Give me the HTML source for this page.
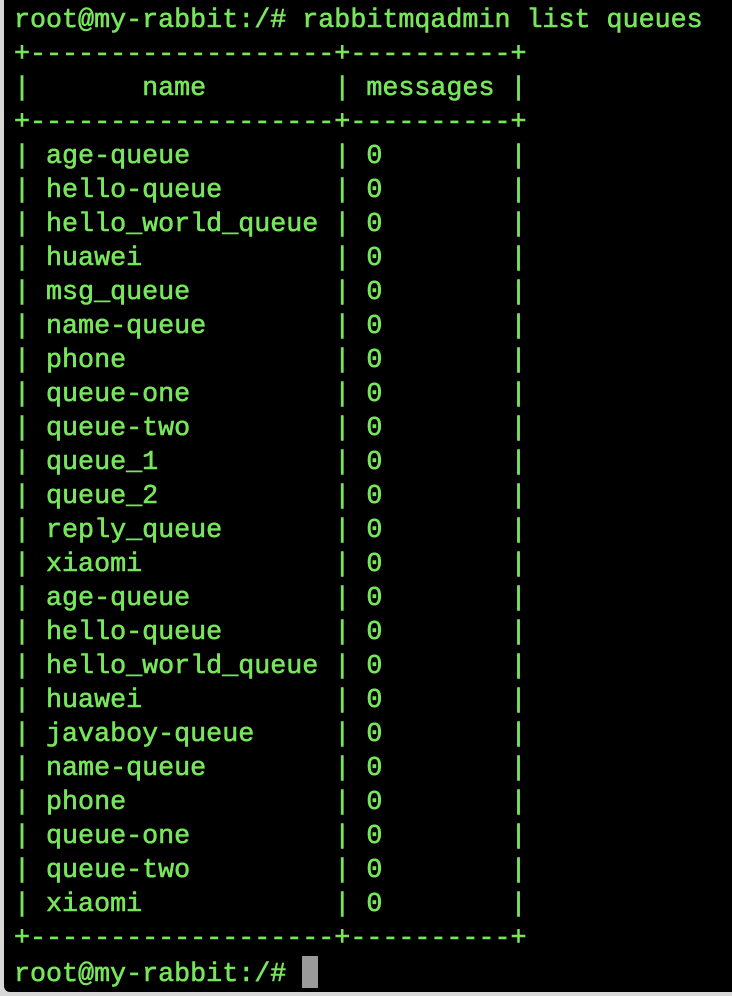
<!DOCTYPE html>
<html><head><meta charset="utf-8"><style>
html,body{margin:0;padding:0;width:732px;height:996px;overflow:hidden;background:#d8d8d8}
.t{position:absolute;left:4px;top:0;width:728px;height:992px;background:#000;border-bottom-left-radius:6px}
pre{margin:0;position:absolute;left:10px;top:4px;font-family:"Liberation Mono",monospace;font-size:26.7px;line-height:34px;color:#78e65c;-webkit-text-stroke:0.6px #78e65c;white-space:pre}
.c{display:inline-block;width:16px;height:32px;background:#9a9a9a;vertical-align:-7px;-webkit-text-stroke:0}
</style></head><body><div class="t"><pre>root@my-rabbit:/# rabbitmqadmin list queues
+-------------------+----------+
|       name        | messages |
+-------------------+----------+
| age-queue         | 0        |
| hello-queue       | 0        |
| hello_world_queue | 0        |
| huawei            | 0        |
| msg_queue         | 0        |
| name-queue        | 0        |
| phone             | 0        |
| queue-one         | 0        |
| queue-two         | 0        |
| queue_1           | 0        |
| queue_2           | 0        |
| reply_queue       | 0        |
| xiaomi            | 0        |
| age-queue         | 0        |
| hello-queue       | 0        |
| hello_world_queue | 0        |
| huawei            | 0        |
| javaboy-queue     | 0        |
| name-queue        | 0        |
| phone             | 0        |
| queue-one         | 0        |
| queue-two         | 0        |
| xiaomi            | 0        |
+-------------------+----------+
root@my-rabbit:/# <span class="c"></span></pre></div></body></html>
